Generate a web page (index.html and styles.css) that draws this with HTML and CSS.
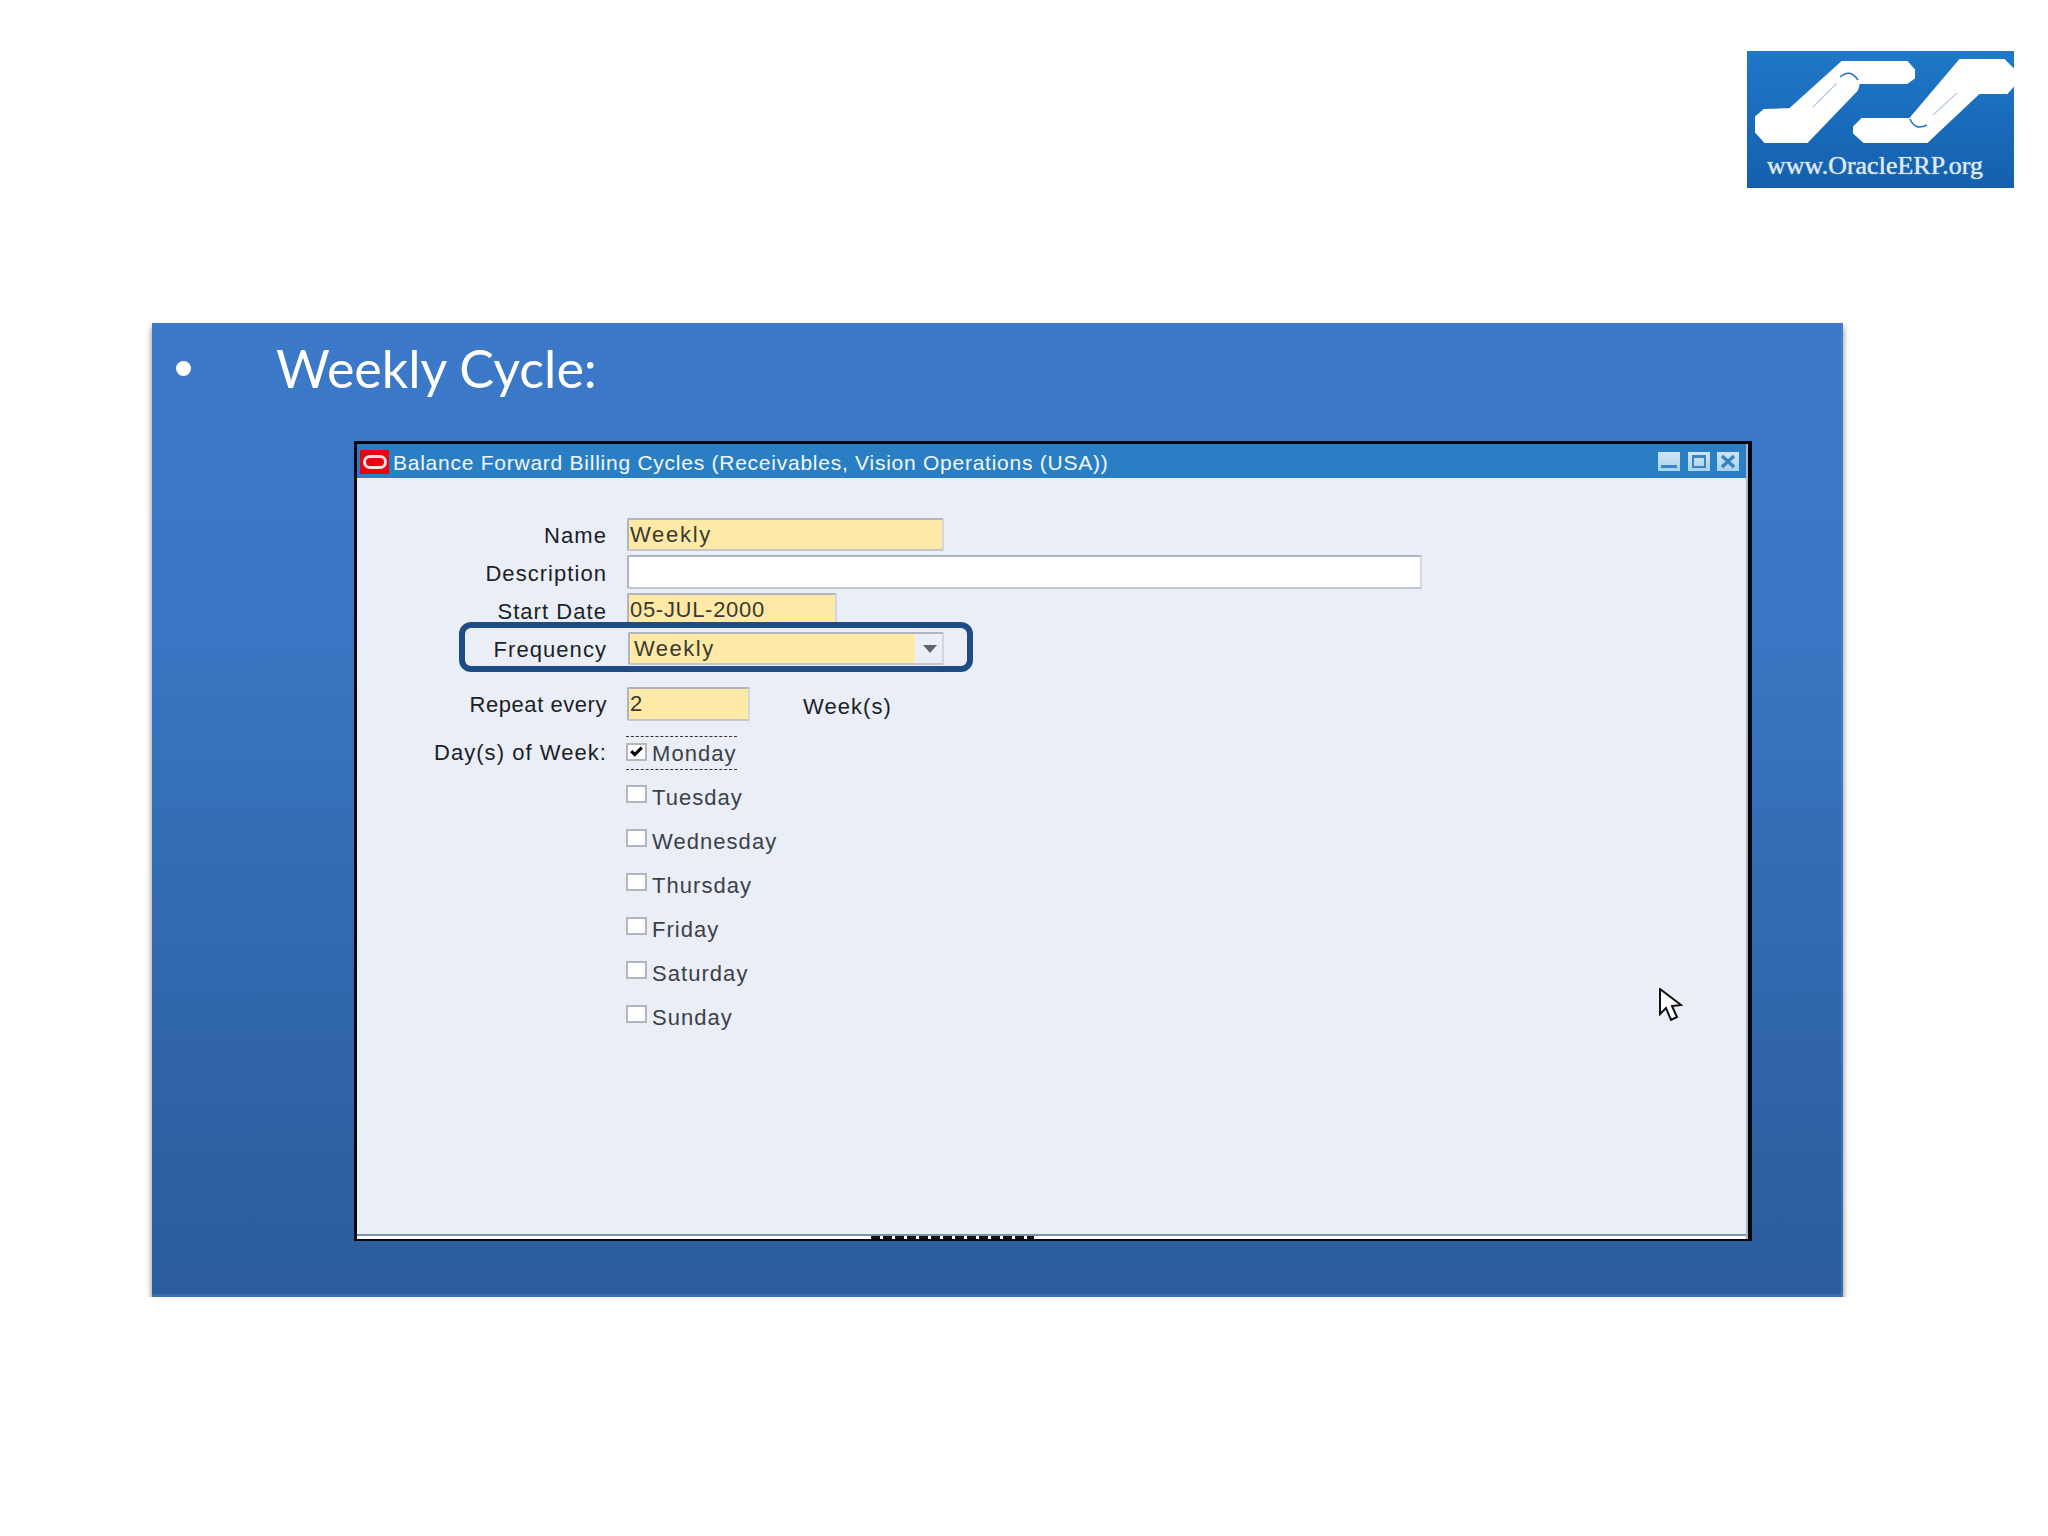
FILE: index.html
```html
<!DOCTYPE html>
<html lang="en">
<head>
    <meta charset="UTF-8">
    <meta name="viewport" content="width=device-width, initial-scale=1.0">
    <title>Weekly Cycle</title>
    <link rel="stylesheet" href="styles.css">
</head>
<body>
    <div class="top">
        <div class="logo">
            <svg class="logo-hands" viewBox="0 0 267 100" width="267" height="100">
                <path class="hand" d="M17 59 L43 58 L95 11 L160 11 L167 19 L167 27 L160 32 L112 32 L110 39 L60 91 L18 91 L9 81 L9 66 Z"/>
                <path class="hand" d="M163 68 L213 9 L257 9 L267 19 L267 34 L260 42 L232 42 L180 91 L117 91 L107 82 L107 76 L115 68 Z"/>
                <path class="finger" d="M93 26 Q103 17 111 29"/>
                <path class="finger" d="M163 68 Q168 80 180 74"/>
                <path class="crease" d="M90 32 L66 56"/>
                <path class="crease" d="M186 64 L210 42"/>
            </svg>
            <div class="logo-text">www.OracleERP.org</div>
        </div>
    </div>

    <div class="slide">
        <div class="slide-title"><span class="bullet"></span>Weekly Cycle:</div>

        <div class="window">
            <div class="titlebar">
                <span class="oracle-icon"><span class="oracle-ring"></span></span>
                <span class="title-text">Balance Forward Billing Cycles (Receivables, Vision Operations (USA))</span>
                <span class="win-buttons">
                    <span class="win-btn"><svg viewBox="0 0 22 19"><rect x="3" y="13" width="16" height="3"/></svg></span>
                    <span class="win-btn"><svg viewBox="0 0 22 19"><path d="M4 3H18V16H4Z M6 6V14H16V6Z" fill-rule="evenodd"/></svg></span>
                    <span class="win-btn"><svg viewBox="0 0 22 19"><path d="M5 4L17 15M17 4L5 15" class="x"/></svg></span>
                </span>
            </div>

            <div class="form">
                <div class="row row-name">
                    <label class="lbl">Name</label>
                    <div class="field req w-name">Weekly</div>
                </div>
                <div class="row row-desc">
                    <label class="lbl">Description</label>
                    <div class="field w-desc"></div>
                </div>
                <div class="row row-date">
                    <label class="lbl">Start Date</label>
                    <div class="field req w-date">05-JUL-2000</div>
                </div>
                <div class="row row-freq">
                    <div class="highlight"></div>
                    <label class="lbl">Frequency</label>
                    <div class="field req w-freq">
                        <span>Weekly</span>
                        <span class="drop"><span class="arrow"></span></span>
                    </div>
                </div>
                <div class="row row-repeat">
                    <label class="lbl">Repeat every</label>
                    <div class="field req w-repeat">2</div>
                    <span class="unit">Week(s)</span>
                </div>
                <div class="days">
                    <label class="lbl lbl-days">Day(s) of Week:</label>
                    <div class="day-list">
                        <div class="day"><span class="focus"><span class="box"><svg viewBox="0 0 18 16"><path d="M3 7L7 11L15 3" class="tick"/></svg></span>Monday</span></div>
                        <div class="day"><span class="box"></span>Tuesday</div>
                        <div class="day"><span class="box"></span>Wednesday</div>
                        <div class="day"><span class="box"></span>Thursday</div>
                        <div class="day"><span class="box"></span>Friday</div>
                        <div class="day"><span class="box"></span>Saturday</div>
                        <div class="day"><span class="box"></span>Sunday</div>
                    </div>
                </div>
                <svg class="cursor" viewBox="0 0 24 36" width="24" height="36">
                    <path d="M1 1V26L7 20L12 32L18 29L13 18L22 17Z"/>
                </svg>
            </div>
            <div class="win-foot"><span class="clipped"></span></div>
        </div>
    </div>
</body>
</html>
```

FILE: styles.css
```css
body {
    margin: 0;
    background: #fff;
    font-family: "Liberation Sans", Arial, sans-serif;
}
.top {
    display: flex;
    justify-content: flex-end;
    padding: 51px 34px 0 0;
}
.logo {
    width: 267px;
    height: 137px;
    background: linear-gradient(180deg, #1f78c8, #1460ad);
    display: flex;
    flex-direction: column;
}
.logo-hands {
    display: block;
}
.hand {
    fill: #fff;
    stroke: #fff;
    stroke-width: 2;
    stroke-linejoin: round;
}
.finger {
    fill: none;
    stroke: #2a72bd;
    stroke-width: 1.5;
}
.crease {
    fill: none;
    stroke: #b9cbe3;
    stroke-width: 1.2;
}
.logo-text {
    font-family: "Liberation Serif", serif;
    font-size: 26px;
    color: #dce9f6;
    margin-left: 20px;
    text-shadow: 0 0 1px #dce9f6;
}
.slide {
    margin: 135px 0 0 152px;
    width: 1691px;
    height: 974px;
    box-sizing: border-box;
    padding: 0 0 0 202px;
    background: linear-gradient(180deg, #3c79c9 0%, #3a76c4 30%, #2c5f9f 90%, #2b5d9c 100%);
    box-shadow: 0 4px 6px rgba(0, 0, 0, 0.5), inset -2px -3px 2px rgba(90, 140, 210, 0.45);
}
.slide-title {
    height: 118px;
    display: flex;
    align-items: flex-start;
    font-family: Lato, sans-serif;
    font-size: 52px;
    line-height: 90px;
    color: #fff;
    margin-left: -202px;
    padding-left: 24px;
}
.bullet {
    width: 15px;
    height: 15px;
    border-radius: 50%;
    background: #fff;
    margin: 38px 85px 0 0;
}
.window {
    width: 1398px;
    height: 800px;
    box-sizing: border-box;
    border: solid #05070c;
    border-width: 3px 4px 2px 3px;
    padding-right: 2px;
    background: #a9b4c6;
    display: flex;
    flex-direction: column;
}
.titlebar {
    height: 34px;
    background: #2a7fc4;
    color: #f2f7fc;
    display: flex;
    align-items: center;
    padding: 2px 7px 0 3px;
    box-sizing: border-box;
    font-size: 21px;
    letter-spacing: 0.75px;
}
.oracle-icon {
    width: 29px;
    height: 24px;
    background: #f0000e;
    display: flex;
    align-items: center;
    justify-content: center;
    margin: 0 4px 1px 0;
}
.oracle-ring {
    width: 18px;
    height: 8px;
    border: 3px solid #fbe3e3;
    border-radius: 7px;
}
.title-text {
    flex: 1;
    padding-top: 2px;
}
.win-buttons {
    display: flex;
    gap: 7.5px;
    margin-bottom: 2px;
}
.win-btn {
    width: 22px;
    height: 19px;
    background: linear-gradient(180deg, #cfe5f6, #a9d2ee);
    display: block;
}
.win-btn svg {
    display: block;
    fill: #3b83c4;
}
.win-btn .x {
    stroke: #3b83c4;
    stroke-width: 3.5;
    fill: none;
}
.form {
    flex: 1;
    position: relative;
    padding-top: 40px;
    background: #e9eef7;
    font-size: 22px;
    letter-spacing: 1.05px;
    color: #1c1f26;
}
.row {
    display: flex;
    align-items: flex-end;
    position: relative;
}
.lbl {
    width: 250px;
    margin-right: 20px;
    padding-bottom: 2px;
    text-align: right;
    flex-shrink: 0;
}
.field {
    box-sizing: border-box;
    border: 2px solid #b0b4be;
    border-right-color: #d3d6de;
    border-bottom-color: #c3c7d0;
    border-radius: 2px;
    background: #fff;
    padding-left: 1px;
    color: #3a3a30;
    line-height: 29px;
}
.req {
    background: #ffe9a6;
}
.row-name {
    height: 33px;
}
.w-name {
    width: 317px;
    height: 33px;
    letter-spacing: 1.7px;
}
.row-desc {
    height: 34px;
    margin-top: 4px;
}
.w-desc {
    width: 795px;
    height: 34px;
}
.row-date {
    height: 34px;
    margin-top: 4px;
}
.w-date {
    width: 210px;
    height: 34px;
    letter-spacing: 0.7px;
}
.row-freq {
    height: 33px;
    margin-top: 5px;
}
.highlight {
    position: absolute;
    left: 102px;
    top: -10px;
    width: 514px;
    height: 50px;
    box-sizing: border-box;
    border: 6px solid #1f4c85;
    border-radius: 12px;
    z-index: 1;
}
.w-freq {
    width: 316px;
    height: 33px;
    display: flex;
    justify-content: space-between;
    padding-left: 4px;
    margin-left: 1px;
    margin-right: -1px;
    letter-spacing: 1.5px;
}
.drop {
    width: 27px;
    background: #e9eef7;
    display: flex;
    align-items: center;
    justify-content: center;
}
.arrow {
    border: 7px solid transparent;
    border-top: 8px solid #60656f;
    border-bottom: 0;
    margin-left: 2px;
}
.row-repeat {
    height: 34px;
    margin-top: 22px;
}
.row-repeat .lbl {
    padding-bottom: 3px;
    letter-spacing: 0.55px;
}
.w-repeat {
    width: 123px;
    height: 34px;
}
.unit {
    margin-left: 53px;
    padding-bottom: 1px;
}
.days {
    display: flex;
    margin-top: 10px;
}
.lbl-days {
    padding-top: 9px;
}
.day-list {
    display: flex;
    flex-direction: column;
    margin-left: -1px;
    color: #3c4048;
}
.day {
    height: 44px;
    padding-top: 2px;
    box-sizing: border-box;
    display: flex;
    align-items: center;
}
.focus {
    display: flex;
    align-items: center;
    height: 30px;
    padding-top: 2px;
    margin-top: -2px;
    border-top: 1px dashed #333;
    border-bottom: 1px dashed #333;
}
.box {
    width: 21px;
    height: 18px;
    box-sizing: border-box;
    border: 2px solid #b3b6bd;
    background: #fff;
    margin: -8px 5px 0 0;
    display: block;
}
.focus .box {
    margin-top: -5px;
}
.box svg {
    display: block;
    width: 17px;
    height: 14px;
}
.tick {
    fill: none;
    stroke: #000;
    stroke-width: 3.5;
}
.cursor {
    position: absolute;
    left: 1302px;
    top: 510px;
}
.cursor path {
    fill: #fff;
    stroke: #111;
    stroke-width: 2;
}
.win-foot {
    height: 5px;
    background: #fff;
    border-top: 2px solid #7f8fa8;
    box-sizing: border-box;
}
.clipped {
    display: block;
    width: 163px;
    height: 3px;
    margin-left: 514px;
    background: repeating-linear-gradient(90deg, #111 0 9px, #fff 9px 12px);
}
```
